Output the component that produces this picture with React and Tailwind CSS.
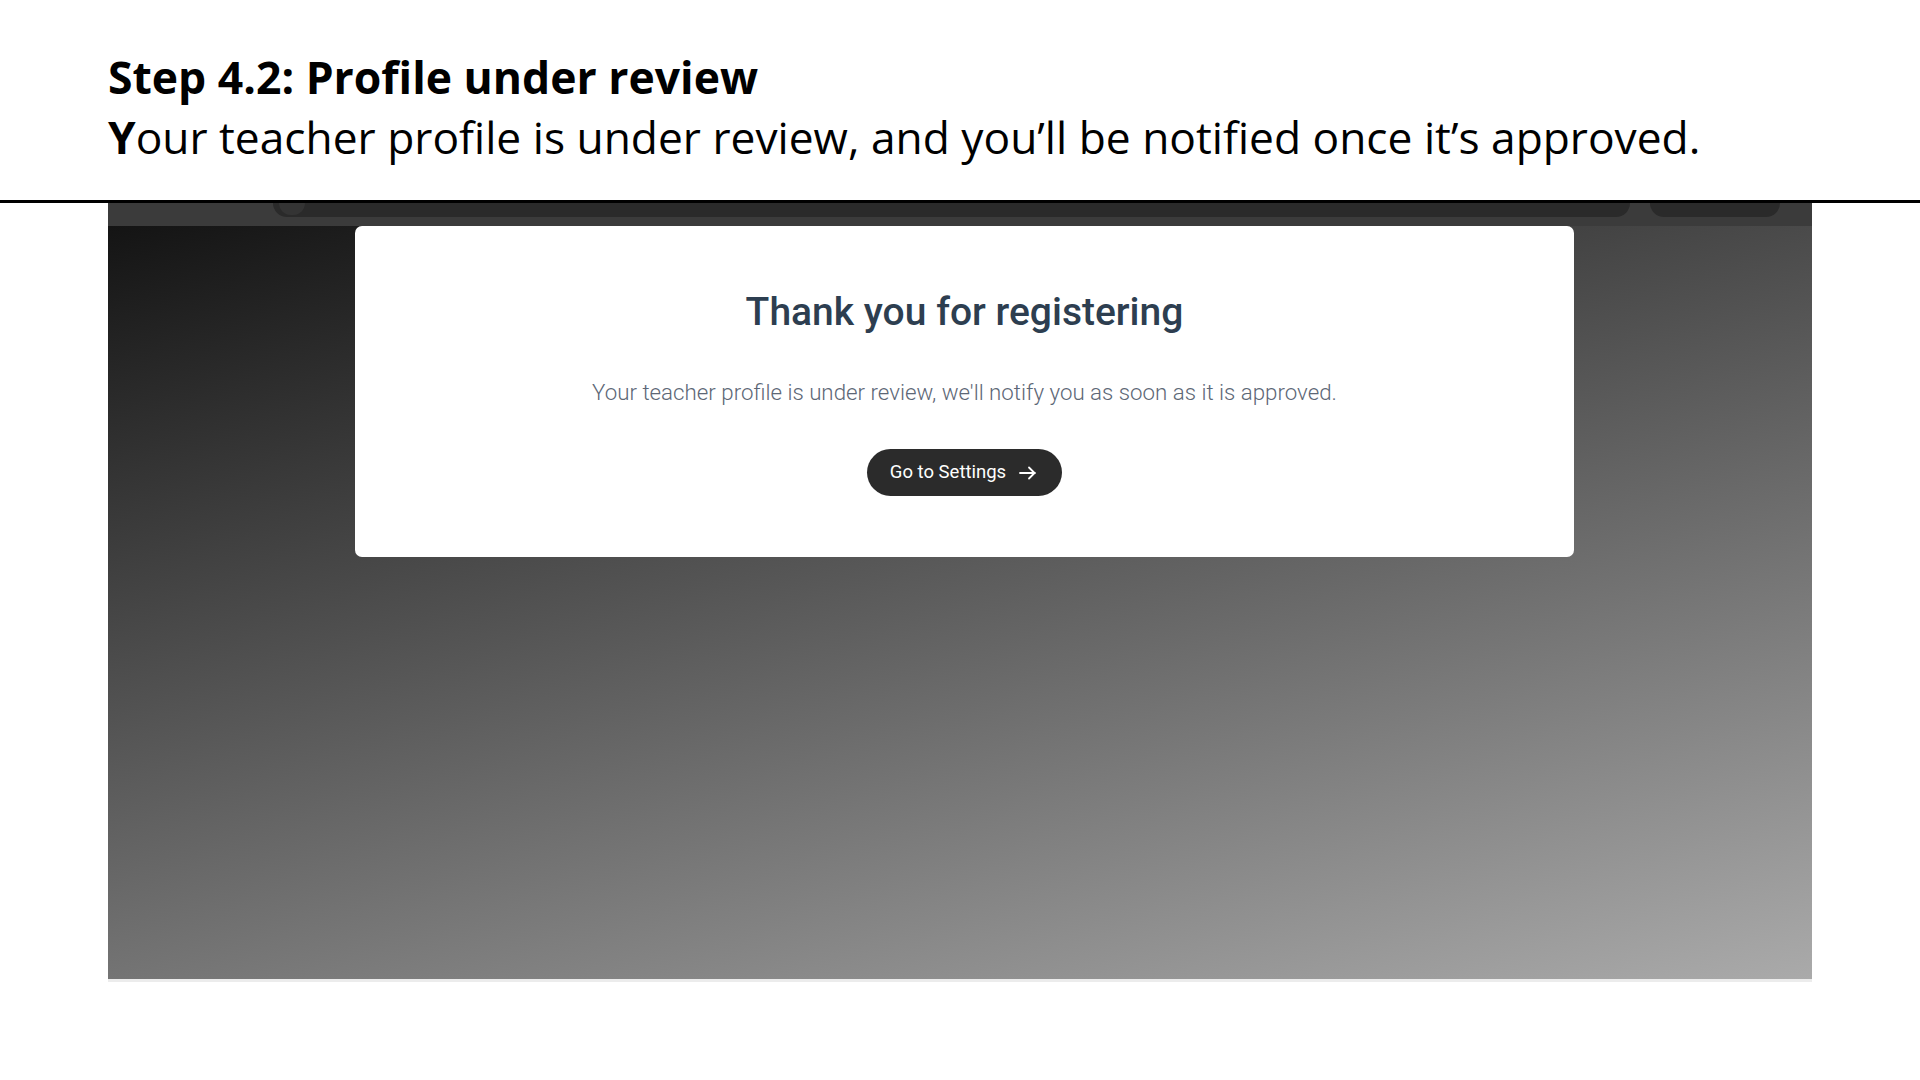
import React from "react";

export default function App() {
  return (
    <div className="w-[1920px] h-[1080px] bg-white overflow-hidden relative" style={{ fontFamily: '"Open Sans", sans-serif' }}>
      <div className="pl-[108px] pt-[47px] h-[200px]">
        <h1 className="text-[44.5px] font-bold leading-[60px] text-black" style={{ fontFamily: '"Open Sans", sans-serif' }}>
          Step 4.2: Profile under review
        </h1>
        <p className="text-[44.3px] leading-[60px] text-black" style={{ fontFamily: '"Open Sans", sans-serif' }}>
          <span className="font-bold">Y</span>our teacher profile is under review, and you’ll be notified once it’s approved.
        </p>
      </div>
      <div className="h-[3px] bg-black w-full"></div>
      <div className="ml-[108px] w-[1704px] h-[779px] flex flex-col bg-[linear-gradient(166deg,#111111,#aaaaaa)] border-b-[3px] border-[#ececec]">
        <div className="h-[23px] bg-[#3b3b3b] flex items-start">
          <div className="ml-[165px] w-[1357px] h-[14px] bg-[#2a2a2a] rounded-b-[14px] flex items-start">
            <div className="ml-[6px] w-[26px] h-[12px] bg-[#343434] rounded-b-full"></div>
          </div>
          <div className="ml-[20px] w-[130px] h-[14px] bg-[#2a2a2a] rounded-b-[14px]"></div>
        </div>
        <div className="ml-[247px] w-[1219px] h-[331px] bg-white rounded-[7px] flex flex-col items-center" style={{ fontFamily: 'Roboto, sans-serif' }}>
          <h2 className="mt-[62px] text-[39px] leading-[48px] font-medium text-[#2d3e50]">Thank you for registering</h2>
          <p className="mt-[41px] text-[22.3px] leading-[30px] font-light text-[#5d6776]">
            Your teacher profile is under review, we'll notify you as soon as it is approved.
          </p>
          <button className="mt-[42px] h-[47px] pl-[23px] pr-[26px] rounded-full bg-[#2b2b2b] text-white flex items-center gap-[13px] text-[18.5px] font-normal">
            <span>Go to Settings</span>
            <svg width="17" height="14" viewBox="0 0 17 14" fill="none" stroke="white" strokeWidth="1.8" strokeLinecap="round" strokeLinejoin="round">
              <path d="M1 7h15M10 1.5 15.5 7 10 12.5" />
            </svg>
          </button>
        </div>
      </div>
    </div>
  );
}
